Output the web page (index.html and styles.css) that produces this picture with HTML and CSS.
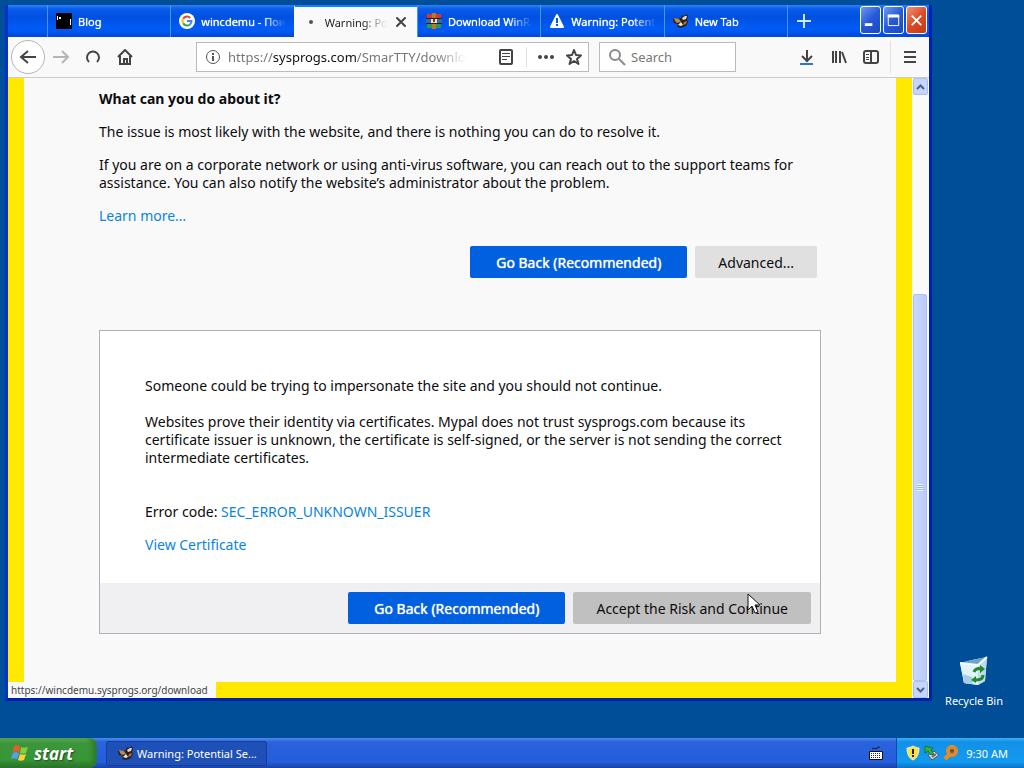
FILE: index.html
```html
<!DOCTYPE html>
<html lang="en">
<head>
  <meta charset="UTF-8">
  <meta name="viewport" content="width=device-width, initial-scale=1.0">
  <title>Warning: Potential Security Risk Ahead</title>
  <link rel="stylesheet" href="styles.css">
</head>
<body>
  <svg class="defs" width="0" height="0" aria-hidden="true">
    <symbol id="raccoon" viewBox="0 0 16 16">
      <path d="M1 5l4 1 3-1 1-3 2 1 3-2 1 3-1 2 1 3-2 4-5 2-4-1 1-3-4-1-1-3z" fill="#2a211c"/>
      <path d="M1 5l5 1 2 3-4 1-2-2z" fill="#b98a4e"/>
      <path d="M9 5l3-2 2 0-1 3-3 1z" fill="#e4dac6"/>
      <path d="M11 9l3-1-1 3-3 1z" fill="#b0703a"/>
      <path d="M5 12l3-3 2 3-2 1z" fill="#efe6d5"/>
    </symbol>
  </svg>

  <div class="desktop">
    <div class="window">
      <div class="titlebar">
        <div class="tabs">
          <div class="tab">
            <svg class="favicon" viewBox="0 0 16 16"><path fill="#000" d="M0 0h16v16H0z"/><path fill="#fff" d="M1 3h1v4H1zM3 4h2v2H3zM14 6h1v6h-1z"/></svg>
            <span class="tab-title">Blog</span>
          </div>
          <div class="tab">
            <svg class="favicon" viewBox="0 0 16 16">
              <circle cx="8" cy="8" r="8" fill="#fff"/>
              <g fill="none" stroke-width="2">
                <path d="M4.200 5.600A4.500 4.500 0 0 1 11.300 4.900" stroke="#ea4335"/>
                <path d="M4.200 5.600a4.500 4.500 0 0 0 0 4.800" stroke="#fbbc05"/>
                <path d="M4.200 10.400a4.500 4.500 0 0 0 6.800 1" stroke="#34a853"/>
                <path d="M11 11.400A4.500 4.500 0 0 0 12.500 8H8" stroke="#4285f4"/>
              </g>
            </svg>
            <span class="tab-title">wincdemu - Поис</span>
          </div>
          <div class="tab active">
            <svg class="favicon" viewBox="0 0 16 16"><circle cx="8" cy="8" r="2" fill="#555"/></svg>
            <span class="tab-title">Warning: Pot</span>
            <button class="tab-close" aria-label="Close tab"><svg width="12" height="12" viewBox="0 0 12 12"><path d="M2 2l8 8M10 2l-8 8" stroke="#444" stroke-width="2" stroke-linecap="round"/></svg></button>
          </div>
          <div class="tab">
            <svg class="favicon" viewBox="0 0 16 16">
              <path fill="#d4392c" d="M1 1h14v4H1z"/><path fill="#3566b8" d="M0 6h16v4H0z"/><path fill="#2f9a46" d="M1 11h14v4H1z"/>
              <path fill="#b9782f" d="M6 0h4v16H6z"/><path fill="#222" d="M0 5h16v1H0zM0 10h16v1H0z"/><path fill="#f2e3b5" d="M5 6h6v4H5z"/><path fill="#7a3b18" d="M7 6h2v3H7z"/>
            </svg>
            <span class="tab-title">Download WinRA</span>
          </div>
          <div class="tab">
            <svg class="favicon" viewBox="0 0 16 16"><path fill="#fff" stroke="#fff" stroke-width="2" stroke-linejoin="round" d="M8 2l6 12H2z"/><path stroke="#0b55dd" stroke-width="2" d="M8 5v5M8 11v2"/></svg>
            <span class="tab-title">Warning: Potent</span>
          </div>
          <div class="tab">
            <svg class="favicon"><use href="#raccoon"/></svg>
            <span class="tab-title">New Tab</span>
          </div>
          <button class="new-tab" aria-label="New tab"><svg width="14" height="14" viewBox="0 0 14 14"><path d="M7 0v14M0 7h14" stroke="#cfe6ff" stroke-width="2"/></svg></button>
        </div>
        <div class="window-buttons">
          <button aria-label="Minimize"><svg viewBox="0 0 20 26"><path fill="#fff" d="M4 16h8v3H4z"/></svg></button>
          <button aria-label="Maximize"><svg viewBox="0 0 20 26"><path fill="none" stroke="#fff" d="M4.500 7.500h11v11h-11z"/><path fill="#fff" d="M4 7h12v3H4z"/></svg></button>
          <button class="close" aria-label="Close"><svg viewBox="0 0 20 26"><path stroke="#fff" stroke-width="2" d="M5 8l10 10M15 8L5 18"/></svg></button>
        </div>
      </div>

      <div class="toolbar">
        <button class="tool back" aria-label="Back"><svg width="18" height="16" viewBox="0 0 18 16"><path d="M17 8H3M9 2L2 8l7 6" /></svg></button>
        <button class="tool forward" aria-label="Forward"><svg width="16" height="16" viewBox="0 0 16 16"><path d="M0 8h14M9 2l6 6-6 6"/></svg></button>
        <button class="tool" aria-label="Reload"><svg width="16" height="16" viewBox="0 0 16 16"><path d="M4 13a6 6 0 1 1 8 0"/></svg></button>
        <button class="tool" aria-label="Home"><svg width="16" height="16" viewBox="0 0 16 16"><path d="M1 8l7-7 7 7M3 7v8h10V7"/><path d="M7 15v-5h3v5"/></svg></button>

        <div class="urlbar">
          <svg width="16" height="16" viewBox="0 0 16 16" fill="none" stroke="#555"><circle cx="8" cy="8" r="6.500"/><path d="M8 7v5M8 4v2" stroke-width="2"/></svg>
          <div class="url">https://<b>sysprogs.com</b>/SmarTTY/downloa</div>
          <button class="tool reader" aria-label="Reader view"><svg width="16" height="18" viewBox="0 0 16 18"><rect x="2" y="2" width="12" height="14" rx="1"/><path d="M4 5.500h8M4 8.500h8M4 11.500h5" stroke-width="1"/></svg></button>
          <button class="tool dots" aria-label="Page actions"><svg width="18" height="6" viewBox="0 0 18 6"><g fill="#444" stroke="none"><circle cx="3" cy="3" r="2"/><circle cx="9" cy="3" r="2"/><circle cx="15" cy="3" r="2"/></g></svg></button>
          <button class="tool star" aria-label="Bookmark"><svg width="16" height="16" viewBox="0 0 16 16"><path stroke-linejoin="round" d="M8 1l2 5 5 .5-4 3.500 1.500 5L8 12l-4.500 3L5 10 1 6.500 6 6z"/></svg></button>
        </div>

        <label class="search">
          <svg width="18" height="18" viewBox="0 0 18 18" fill="none" stroke="#8a8a8a" stroke-width="2"><circle cx="7" cy="7" r="5"/><path d="M11 11l6 6"/></svg>
          <input type="text" placeholder="Search" aria-label="Search">
        </label>

        <div class="tools-right">
          <button class="tool" aria-label="Downloads"><svg width="16" height="18" viewBox="0 0 16 18"><path d="M8 2v10M3 8l5 5 5-5"/><path d="M1 16h13" stroke="#2a78d0"/></svg></button>
          <button class="tool" aria-label="Library"><svg width="16" height="16" viewBox="0 0 16 16"><path d="M2 2v12M5 2v12M9 2v12M11 3l4 11"/></svg></button>
          <button class="tool" aria-label="Sidebars"><svg width="16" height="16" viewBox="0 0 16 16"><rect x="1" y="2" width="14" height="12" rx="2"/><path d="M8 2v12"/><path d="M3 5.500h3M3 8.500h3M3 10.500h3" stroke-width="1"/></svg></button>
        </div>
        <button class="tool menu" aria-label="Menu"><svg width="14" height="14" viewBox="0 0 14 14"><path d="M1 2h12M1 7h12M1 12h12"/></svg></button>
      </div>

      <div class="viewport">
        <main class="page">
          <h1>What can you do about it?</h1>
          <p>The issue is most likely with the website, and there is nothing you can do to resolve it.</p>
          <p>If you are on a corporate network or using anti-virus software, you can reach out to the support teams for assistance. You can also notify the website’s administrator about the problem.</p>
          <p><a href="#">Learn more…</a></p>
          <div class="button-row">
            <button class="btn primary">Go Back (Recommended)</button>
            <button class="btn">Advanced...</button>
          </div>

          <section class="advanced">
            <div class="advanced-text">
              <p>Someone could be trying to impersonate the site and you should not continue.</p>
              <p>Websites prove their identity via certificates. Mypal does not trust sysprogs.com because its certificate issuer is unknown, the certificate is self-signed, or the server is not sending the correct intermediate certificates.</p>
              <p class="error-code">Error code: <a href="#">SEC_ERROR_UNKNOWN_ISSUER</a></p>
              <p class="view-cert"><a href="#">View Certificate</a></p>
            </div>
            <div class="advanced-footer">
              <button class="btn primary">Go Back (Recommended)</button>
              <button class="btn hovered">Accept the Risk and Continue</button>
            </div>
          </section>
        </main>
        <div class="scrollbar">
          <button aria-label="Scroll up"><svg width="9" height="6" viewBox="0 0 9 6"><path d="M1 5l3.500-3.500L8 5"/></svg></button>
          <div class="track"><div class="thumb"></div></div>
          <button aria-label="Scroll down"><svg width="9" height="6" viewBox="0 0 9 6"><path d="M1 1l3.500 3.500L8 1"/></svg></button>
        </div>
        <div class="status">https://wincdemu.sysprogs.org/download</div>
      </div>
    </div>

    <div class="icons">
      <div class="desktop-icon">
        <svg width="32" height="32" viewBox="0 0 32 32">
          <path d="M2 7l12-3 15-3-2 24-7 4-14-2z" fill="#c8e3f3"/>
          <path d="M2 7l12-3 15-3-9 8z" fill="#6fa5c6"/>
          <path d="M2 7l18 2v20L6 27z" fill="#e3f3fa"/>
          <path d="M20 9l9-8-2 24-7 4z" fill="#bcdcec"/>
          <path d="M2 7l18 2 9-8" fill="none" stroke="#f8fdff" stroke-width="2"/>
          <path d="M5 18l9 3 1 7-9-1z" fill="#a6cfe7"/>
          <g fill="none" stroke="#1d8a2b" stroke-width="3"><path d="M16 16c1-3 4-4 7-3M25 19c0 4-3 5-7 5"/></g>
          <path fill="#1d8a2b" d="M22 9l5 4-5 4zM18 20v7l-5-3z"/>
        </svg>
        <span>Recycle Bin</span>
      </div>
    </div>

    <svg class="cursor" width="14" height="22" viewBox="0 0 14 22"><path d="M1 1v16l4-4 3 7 3-1-3-7h5z" fill="#fff" stroke="#111"/></svg>
  </div>

  <div class="taskbar">
    <button class="start">
      <svg width="18" height="18" viewBox="0 0 18 18">
        <path d="M3 2c2-1 4-1 6 0L8 8C6 7 4 7 2 8z" fill="#f0592b"/><path d="M10 3c2 1 4 1 7 0l-2 6c-2 1-4 1-6 0z" fill="#8ccb3c"/>
        <path d="M2 9c2-1 4-1 6 0l-2 6c-2-1-4-1-6 0z" fill="#5b9df0"/><path d="M9 10c2 1 4 1 6 0l-2 6c-2 1-4 1-6 0z" fill="#fbd13c"/>
      </svg>
      <span>start</span>
    </button>
    <button class="task"><svg class="favicon"><use href="#raccoon"/></svg><span>Warning: Potential Se...</span></button>
    <svg class="keyboard" width="14" height="14" viewBox="0 0 14 14"><path d="M3 3c2-2 3 1 5-1s2 0 3-1" stroke="#111" fill="none"/><path fill="#fff" stroke="#111" d="M.500 5.500h13v8H.500z"/><path stroke="#222" stroke-dasharray="1 1" d="M2 7.500h10M2 9.500h10M2 11.500h10"/></svg>
    <div class="tray">
      <svg width="16" height="16" viewBox="0 0 16 16"><path d="M8 1c2 1 4 2 6 2 0 6-2 10-6 12C4 13 2 9 2 3c2 0 4-1 6-2z" fill="#ffe13a" stroke="#e8edf5"/><path d="M8 4v5M8 10v2" stroke="#222" stroke-width="2"/></svg>
      <svg width="16" height="16" viewBox="0 0 16 16"><path d="M4 10l6-4 5 4-7 5z" fill="#d6dce0" stroke="#555"/><path d="M8 12l4-3" stroke="#667" stroke-width="2"/><path d="M1 1l8 2-2 2 3 4-3 1-3-4-3 2z" fill="#35b045" stroke="#19752a"/></svg>
      <svg width="16" height="16" viewBox="0 0 16 16"><circle cx="9" cy="6" r="5" fill="#c98b4a" stroke="#ef8a1c" stroke-width="2"/><circle cx="9" cy="6" r="2" fill="#7a4a1c"/><path d="M6 10l-4 4" stroke="#ef8a1c" stroke-width="4"/></svg>
      <span class="clock">9:30 AM</span>
    </div>
  </div>
</body>
</html>
```
FILE: styles.css
```css
* {
  box-sizing: border-box;
}
body {
  margin: 0;
  height: 100vh;
  display: flex;
  flex-direction: column;
  background: #004e98;
  font-family: "Noto Sans", Tahoma, sans-serif;
  font-size: 11px;
  overflow: hidden;
}
button {
  font-family: inherit;
  border: none;
  padding: 0;
  background: none;
}
svg {
  display: block;
  flex: none;
}
.defs {
  position: absolute;
}
.desktop {
  flex: 1;
  min-height: 0;
  display: flex;
  padding: 5px 0 37px 5px;
  position: relative;
}

/* browser window */
.window {
  flex: 1;
  min-width: 0;
  display: flex;
  flex-direction: column;
  border: 3px solid #0831c9;
  border-top: 0;
  border-right-color: #0020b0;
  border-bottom-color: #0020b0;
}
.titlebar {
  display: flex;
  height: 32px;
  flex: none;
  background: linear-gradient(#2a82f6 0, #0a5cec 4px, #0050df 12px, #005cf8 24px, #0048d8 32px);
}
.tabs {
  flex: 1;
  display: flex;
  min-width: 0;
  padding-left: 39px;
}
.tab {
  flex: 1;
  min-width: 0;
  display: flex;
  align-items: center;
  gap: 6px;
  padding: 0 8px;
  border-left: 1px solid #4a94f5;
  color: #fff;
  text-shadow: 0 0 1px #fff;
}
.tab.active {
  background: #f9f9fa;
  border-top: 2px solid #0a84ff;
  border-left-color: #f9f9fa;
  color: #222;
  text-shadow: none;
}
.favicon {
  width: 16px;
  height: 16px;
}
.tab-title {
  flex: 1;
  overflow: hidden;
  white-space: nowrap;
  mask-image: linear-gradient(to left, transparent, #000 24px);
}
.tab-close {
  padding: 4px 2px;
}
.new-tab {
  width: 73px;
  padding-left: 9px;
  border-left: 1px solid #4a94f5;
}
.window-buttons {
  display: flex;
  gap: 2px;
  padding: 1px 2px 0 0;
}
.window-buttons button {
  width: 21px;
  height: 28px;
  border: 1px solid #fff;
  border-radius: 3px;
  background: linear-gradient(135deg, #6f9bf0, #2558d8 50%, #1c49c0);
}
.window-buttons .close {
  background: linear-gradient(135deg, #f0947b, #dc4a24 50%, #c43a16);
}

.toolbar {
  display: flex;
  align-items: center;
  height: 41px;
  flex: none;
  padding: 0 0 0 3px;
  background: #f9f9fa;
  border-bottom: 1px solid #ccc;
}
.tool {
  width: 32px;
  height: 32px;
  display: flex;
  align-items: center;
  justify-content: center;
  flex: none;
}
.tool svg {
  fill: none;
  stroke: #444;
  stroke-width: 2;
}
.tool.back {
  width: 34px;
  height: 34px;
  border: 1px solid #b5b5b8;
  border-radius: 50%;
  background: #fff;
}
.tool.forward svg {
  stroke: #b5b5b8;
}
.urlbar {
  flex: 1;
  display: flex;
  align-items: center;
  height: 30px;
  min-width: 0;
  margin-left: 55px;
  padding-left: 8px;
  border: 1px solid #bbb;
  background: #fff;
}
.url {
  flex: 1;
  overflow: hidden;
  white-space: nowrap;
  margin: 0 24px 0 7px;
  font-size: 13px;
  color: #777;
  mask-image: linear-gradient(to left, transparent, #000 30px);
}
.url b {
  font-weight: normal;
  color: #111;
}
.tool.reader {
  margin-right: 4px;
}
.tool.dots {
  border-left: 1px solid #e2e2e2;
  height: 20px;
  width: 38px;
}
.tool.star {
  width: 20px;
  margin-right: 4px;
}
.search {
  display: flex;
  align-items: center;
  gap: 5px;
  width: 137px;
  height: 30px;
  margin-left: 10px;
  padding-left: 8px;
  border: 1px solid #bbb;
  background: #fff;
}
.search input {
  flex: 1;
  min-width: 0;
  border: none;
  padding: 0;
  background: none;
  font-family: inherit;
  font-size: 13px;
}
.search input::placeholder {
  color: #777;
}
.tools-right {
  display: flex;
  margin-left: 55px;
}
.tool.menu {
  width: 39px;
  margin-left: 3px;
  border-left: 1px solid #e2e2e2;
}

/* page */
.viewport {
  flex: 1;
  min-height: 0;
  display: flex;
  position: relative;
  overflow: hidden;
  background: #ffe900;
}
.page {
  flex: 1;
  align-self: flex-start;
  margin: 0 16px;
  padding: 12px 75px 48px;
  background: #f9f9fa;
  color: #0c0c0d;
  font-size: 14px;
  line-height: 18px;
}
.page h1 {
  margin: 0;
  font-size: 14px;
}
.page p {
  margin: 15px 0 0;
}
.page a {
  color: #0a84e0;
  text-decoration: none;
}
.button-row {
  display: flex;
  justify-content: flex-end;
  gap: 8px;
  margin: 21px 4px 52px;
}
.btn {
  height: 32px;
  padding: 0 23px;
  border-radius: 2px;
  background: #e0e0e1;
  color: #0c0c0d;
  font-size: 14px;
}
.btn.primary {
  padding: 0 26px;
  background: #0060df;
  color: #fff;
  text-shadow: 0 0 1px #fff;
}
.btn.hovered {
  background: #c0c0c0;
}
.advanced {
  border: 1px solid #b1b1b3;
  background: #fff;
}
.advanced-text {
  padding: 46px 24px 29px 45px;
}
.page .advanced-text p {
  margin: 0 0 18px;
}
.page .advanced-text .error-code {
  margin: 36px 0 15px;
}
.page .advanced-text .view-cert {
  margin: 0;
}
.advanced-footer {
  display: flex;
  justify-content: flex-end;
  gap: 8px;
  padding: 9px;
  background: #f0f0f2;
}

.scrollbar {
  width: 17px;
  display: flex;
  flex-direction: column;
  background: #fafaf8;
}
.scrollbar button {
  width: 15px;
  height: 17px;
  margin: 0 1px;
  display: flex;
  align-items: center;
  justify-content: center;
  border: 1px solid #a9bfee;
  border-radius: 2px;
  background: #c6d5fc;
}
.scrollbar path {
  fill: none;
  stroke: #4d6185;
  stroke-width: 2;
}
.track {
  flex: 1;
  display: flex;
  flex-direction: column;
  padding: 0 2px 0 1px;
}
.thumb {
  height: 66%;
  margin-top: auto;
  border: 1px solid #b0c2f0;
  border-radius: 2px;
  background: repeating-linear-gradient(#eef3ff 0 1px, #9db4ea 1px 2px) center / 6px 7px no-repeat,
    linear-gradient(to right, #c9d7fc, #b9cbfa);
}
.status {
  position: absolute;
  left: 0;
  bottom: 0;
  padding: 0 8px 0 3px;
  background: #f9f9fa;
  color: #444;
  font-size: 10px;
  line-height: 16px;
}

.icons {
  width: 92px;
  padding: 651px 8px 0 0;
  color: #fff;
}
.desktop-icon {
  display: flex;
  flex-direction: column;
  align-items: center;
  gap: 5px;
}
.cursor {
  position: absolute;
  left: 747px;
  top: 593px;
}

/* taskbar */
.taskbar {
  display: flex;
  align-items: center;
  height: 30px;
  flex: none;
  background: linear-gradient(#4a8cf0 0, #2a62dc 4px, #245edb 24px, #1941a5 30px);
  color: #fff;
}
.start {
  display: flex;
  align-items: center;
  gap: 5px;
  width: 97px;
  height: 30px;
  padding-left: 11px;
  border-radius: 0 8px 8px 0;
  background: linear-gradient(#6cb86a 0, #3c963b 5px, #379636 22px, #2a7029 30px);
  box-shadow: inset -4px 0 5px #2c7a2b;
  color: #fff;
  font-family: "Open Sans", sans-serif;
  font-size: 17px;
  font-weight: bold;
  font-style: italic;
  text-shadow: 1px 1px 2px #1c4a1c;
}
.task {
  display: flex;
  align-items: center;
  gap: 3px;
  width: 161px;
  height: 25px;
  margin: 0 auto 0 9px;
  padding-left: 11px;
  border: 1px solid #163d98;
  border-radius: 2px;
  background: #1f50b8;
  color: #fff;
  font-size: 11px;
}
.keyboard {
  margin-right: 13px;
}
.tray {
  display: flex;
  align-items: center;
  gap: 3px;
  height: 30px;
  padding: 0 16px 0 8px;
  border-left: 1px solid #0d4aa8;
  background: linear-gradient(#3cb0f4 0, #1290e8 4px, #129aee 24px, #0c72c8 30px);
}
.clock {
  margin-left: 4px;
}
```
